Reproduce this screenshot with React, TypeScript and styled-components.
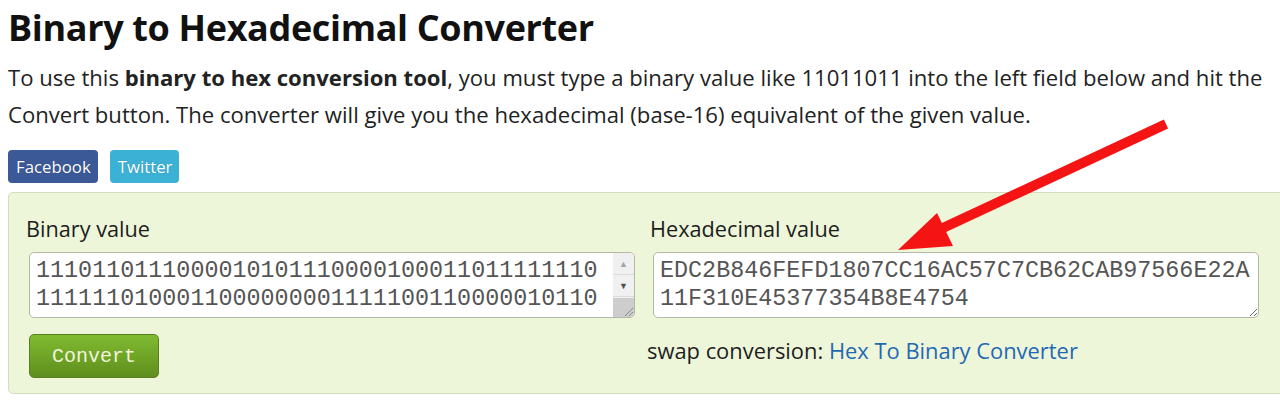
import React from 'react';
import styled, { createGlobalStyle } from 'styled-components';

const Global = createGlobalStyle`
  html, body { margin: 0; padding: 0; background: #fff; overflow: hidden; }
  body { font-family: "Open Sans", "Noto Sans", sans-serif; color: #1d1d1d; }
`;

const Page = styled.div`
  position: relative;
  width: 1280px;
  height: 412px;
  overflow: hidden;
  padding-left: 8px;
  box-sizing: border-box;
`;

const Title = styled.h1`
  margin: 0;
  padding-top: 4px;
  font-size: 36px;
  line-height: 48px;
  font-weight: 700;
  color: #111;
  letter-spacing: -0.35px;
`;

const Intro = styled.p`
  margin: 7px 0 0;
  font-size: 22.1px;
  line-height: 37px;
  color: #222;
  white-space: nowrap;
`;

const ShareRow = styled.div`
  display: flex;
  gap: 12px;
  margin-top: 17px;
`;

const ShareButton = styled.a<{ $bg: string }>`
  display: inline-flex;
  align-items: center;
  height: 33px;
  padding: 0 7px 0 8px;
  border-radius: 4px;
  background: ${p => p.$bg};
  color: #fff;
  font-size: 16.8px;
  text-decoration: none;
  text-shadow: 0 0 1px rgba(0,0,0,0.25);
  box-sizing: border-box;
`;

const Panel = styled.div`
  margin-top: 9px;
  width: 1300px;
  box-sizing: border-box;
  border: 1px solid #d4dcc2;
  border-radius: 5px;
  background: #eef6da;
  padding: 21px 0 15px 20px;
  display: grid;
  grid-template-columns: 606px 606px;
  column-gap: 18px;
`;

const Column = styled.div`
  display: flex;
  flex-direction: column;
`;

const Label = styled.label`
  font-size: 21.7px;
  line-height: 30px;
  margin-left: -3px;
  margin-bottom: 8px;
  color: #1d1d1d;
`;

const FieldBox = styled.div`
  display: flex;
  align-items: flex-start;
  height: 66px;
  border: 1px solid #b4b8a6;
  border-radius: 5px;
  background: #fff;
  overflow: hidden;
  box-sizing: border-box;
`;

const Area = styled.textarea<{ $resizable?: boolean }>`
  flex: 1;
  height: 60px;
  margin: 0;
  border: none;
  outline: none;
  background: transparent;
  padding: 4px 6px 0;
  font-family: "Liberation Mono", "Courier New", monospace;
  font-size: 23.4px;
  line-height: 28px;
  color: #555;
  overflow: hidden;
  resize: ${p => (p.$resizable ? 'both' : 'none')};
  box-sizing: border-box;
`;

const HexArea = styled(Area)`
  flex: none;
  width: 606px;
  height: 66px;
  border: 1px solid #b4b8a6;
  border-radius: 5px;
  background: #fff;
`;

const Scrollbar = styled.div`
  width: 21px;
  height: 100%;
  display: flex;
  flex-direction: column;
  background: #f0f0f0;
`;

const ScrollButton = styled.div<{ $dark?: boolean }>`
  height: 21px;
  display: flex;
  align-items: center;
  justify-content: center;
  border-bottom: 1px solid #dcdcdc;
  color: ${p => (p.$dark ? '#505050' : '#a3a3a3')};
  font-size: 9px;
  line-height: 1;
`;

const Thumb = styled.div`
  flex: 1;
  margin-top: 1px;
  background: #cdcdcd;
  display: flex;
  align-items: flex-end;
  justify-content: flex-end;
`;

const ConvertButton = styled.button`
  margin-top: 16px;
  width: 130px;
  height: 44px;
  border: 1px solid #5a7f1f;
  border-radius: 5px;
  background: linear-gradient(#80bb31, #5f8e1d);
  color: #f0f4dc;
  font-family: "Liberation Mono", "Courier New", monospace;
  font-size: 20px;
  cursor: pointer;
  padding: 0;
`;

const Swap = styled.div`
  margin-top: 18px;
  margin-left: -6px;
  font-size: 21.9px;
  line-height: 30px;
  color: #1d1d1d;
`;

const SwapLink = styled.a`
  color: #1f68b3;
  text-decoration: none;
`;

const ArrowLayer = styled.svg`
  position: absolute;
  left: 0;
  top: 0;
  pointer-events: none;
`;

const hex = 'EDC2B846FEFD1807CC16AC57C7CB62CAB97566E22A11F310E45377354B8E4754';
const bin = hex
  .split('')
  .map(c => parseInt(c, 16).toString(2).padStart(4, '0'))
  .join('');

const Grip = () => (
  <svg width="12" height="12" viewBox="0 0 12 12">
    <path d="M11 3 L3 11 M11 7 L7 11" stroke="#8a8a8a" strokeWidth="1" />
  </svg>
);

export default function App() {
  return (
    <Page>
      <Global />
      <Title>Binary to Hexadecimal Converter</Title>
      <Intro>
        To use this <b>binary to hex conversion tool</b>, you must type a binary value like 11011011 into the left field below and hit the
        <br />
        Convert button. The converter will give you the hexadecimal (base-16) equivalent of the given value.
      </Intro>
      <ShareRow>
        <ShareButton $bg="#3b5897" href="#">Facebook</ShareButton>
        <ShareButton $bg="#3bb1d5" href="#">Twitter</ShareButton>
      </ShareRow>
      <Panel>
        <Column>
          <Label>Binary value</Label>
          <FieldBox>
            <Area readOnly value={bin} spellCheck={false} />
            <Scrollbar>
              <ScrollButton>▲</ScrollButton>
              <ScrollButton $dark>▼</ScrollButton>
              <Thumb>
                <Grip />
              </Thumb>
            </Scrollbar>
          </FieldBox>
          <div>
            <ConvertButton>Convert</ConvertButton>
          </div>
        </Column>
        <Column>
          <Label>Hexadecimal value</Label>
          <HexArea readOnly value={hex} spellCheck={false} $resizable />
          <Swap>
            swap conversion: <SwapLink href="#">Hex To Binary Converter</SwapLink>
          </Swap>
        </Column>
      </Panel>
      <ArrowLayer width="1280" height="412" viewBox="0 0 1280 412">
        <line x1="1166" y1="124" x2="930" y2="234" stroke="#f41414" strokeWidth="10" strokeLinecap="butt" />
        <polygon points="898,250 937,213 953,246" fill="#f41414" />
      </ArrowLayer>
    </Page>
  );
}
